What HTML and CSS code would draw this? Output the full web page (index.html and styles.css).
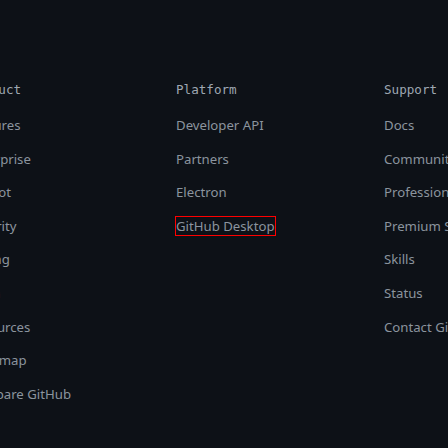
FILE: index.html
```html
<!DOCTYPE html>
<html lang="en">
<head>
<meta charset="utf-8">
<title>Footer</title>
<link rel="stylesheet" href="styles.css">
</head>
<body>
<footer class="footer">
  <div class="cols">
    <section class="col">
      <h2 class="col-title">Product</h2>
      <ul class="links">
        <li><a class="link" href="#">Features</a></li>
        <li><a class="link" href="#">Enterprise</a></li>
        <li><a class="link" href="#">Copilot</a></li>
        <li><a class="link" href="#">Security</a></li>
        <li><a class="link" href="#">Pricing</a></li>
        <li><a class="link" href="#">Team</a></li>
        <li><a class="link" href="#">Resources</a></li>
        <li><a class="link" href="#">Roadmap</a></li>
        <li><a class="link" href="#">Compare GitHub</a></li>
      </ul>
    </section>
    <section class="col">
      <h2 class="col-title">Platform</h2>
      <ul class="links">
        <li><a class="link" href="#">Developer API</a></li>
        <li><a class="link" href="#">Partners</a></li>
        <li><a class="link" href="#">Electron</a></li>
        <li><a class="link link-focus" href="#">GitHub Desktop</a></li>
      </ul>
    </section>
    <section class="col">
      <h2 class="col-title">Support</h2>
      <ul class="links">
        <li><a class="link" href="#">Docs</a></li>
        <li><a class="link" href="#">Community Forum</a></li>
        <li><a class="link" href="#">Professional Services</a></li>
        <li><a class="link" href="#">Premium Support</a></li>
        <li><a class="link" href="#">Skills</a></li>
        <li><a class="link" href="#">Status</a></li>
        <li><a class="link" href="#">Contact GitHub</a></li>
      </ul>
    </section>
  </div>
</footer>
</body>
</html>
```

FILE: styles.css
```css
html, body {
  margin: 0;
  padding: 0;
  background: #0d1117;
  height: 100%;
  overflow: hidden;
}

.footer {
  padding-top: 80px;
}

.cols {
  display: flex;
  margin-left: -32px;
}

.col {
  flex: 0 0 208px;
  width: 208px;
  white-space: nowrap;
}

.col:first-child .links {
  margin-left: -1px;
}

.col-title {
  margin: 0 0 15px;
  font-family: "DejaVu Sans Mono", "Liberation Mono", monospace;
  font-size: 12.6px;
  font-weight: 400;
  line-height: 20px;
  color: #9ea7b2;
}

.links {
  list-style: none;
  margin: 0;
  padding: 0;
  display: flex;
  flex-direction: column;
  gap: 12.6px;
}

.links li {
  line-height: 21px;
  font-family: "Noto Sans", "Open Sans", sans-serif;
  font-size: 13.2px;
}

.link {
  color: #8b949e;
  text-decoration: none;
}

.link-focus {
  outline: 1px solid #ff0000;
  outline-offset: 0;
}
```
